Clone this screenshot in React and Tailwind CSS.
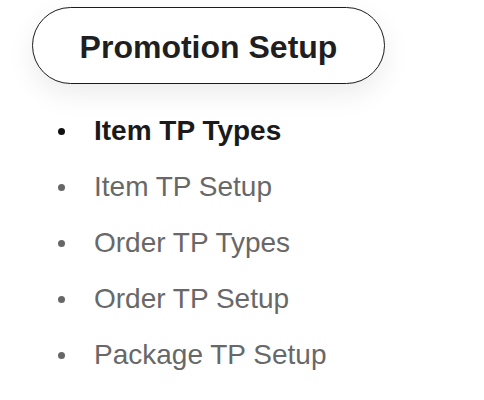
const items = [
  { label: 'Item TP Types', active: true },
  { label: 'Item TP Setup' },
  { label: 'Order TP Types' },
  { label: 'Order TP Setup' },
  { label: 'Package TP Setup' },
];

export default function App() {
  return (
    <div className="min-h-[400px] w-[484px] bg-white pl-[32px] pt-[7px] font-['Liberation_Sans',Arial,sans-serif]">
      <button className="flex h-[77px] w-[353px] items-center justify-center rounded-full border-[1.5px] border-[#1c1c1c] bg-white pt-[2px] text-[32px] font-bold text-[#1f1f1f] shadow-[0_10px_28px_rgba(0,0,0,0.08)]">
        Promotion Setup
      </button>
      <ul className="mt-[19px]">
        {items.map((item) => (
          <li key={item.label} className="flex h-[56px] items-center">
            <span
              className={`ml-[26px] h-[7px] w-[7px] rounded-full ${item.active ? 'bg-[#111]' : 'bg-[#666]'}`}
            />
            <span
              className={`ml-[29px] text-[28px] ${item.active ? 'font-bold text-[#1a1a1a]' : 'text-[#686868]'}`}
            >
              {item.label}
            </span>
          </li>
        ))}
      </ul>
    </div>
  );
}
